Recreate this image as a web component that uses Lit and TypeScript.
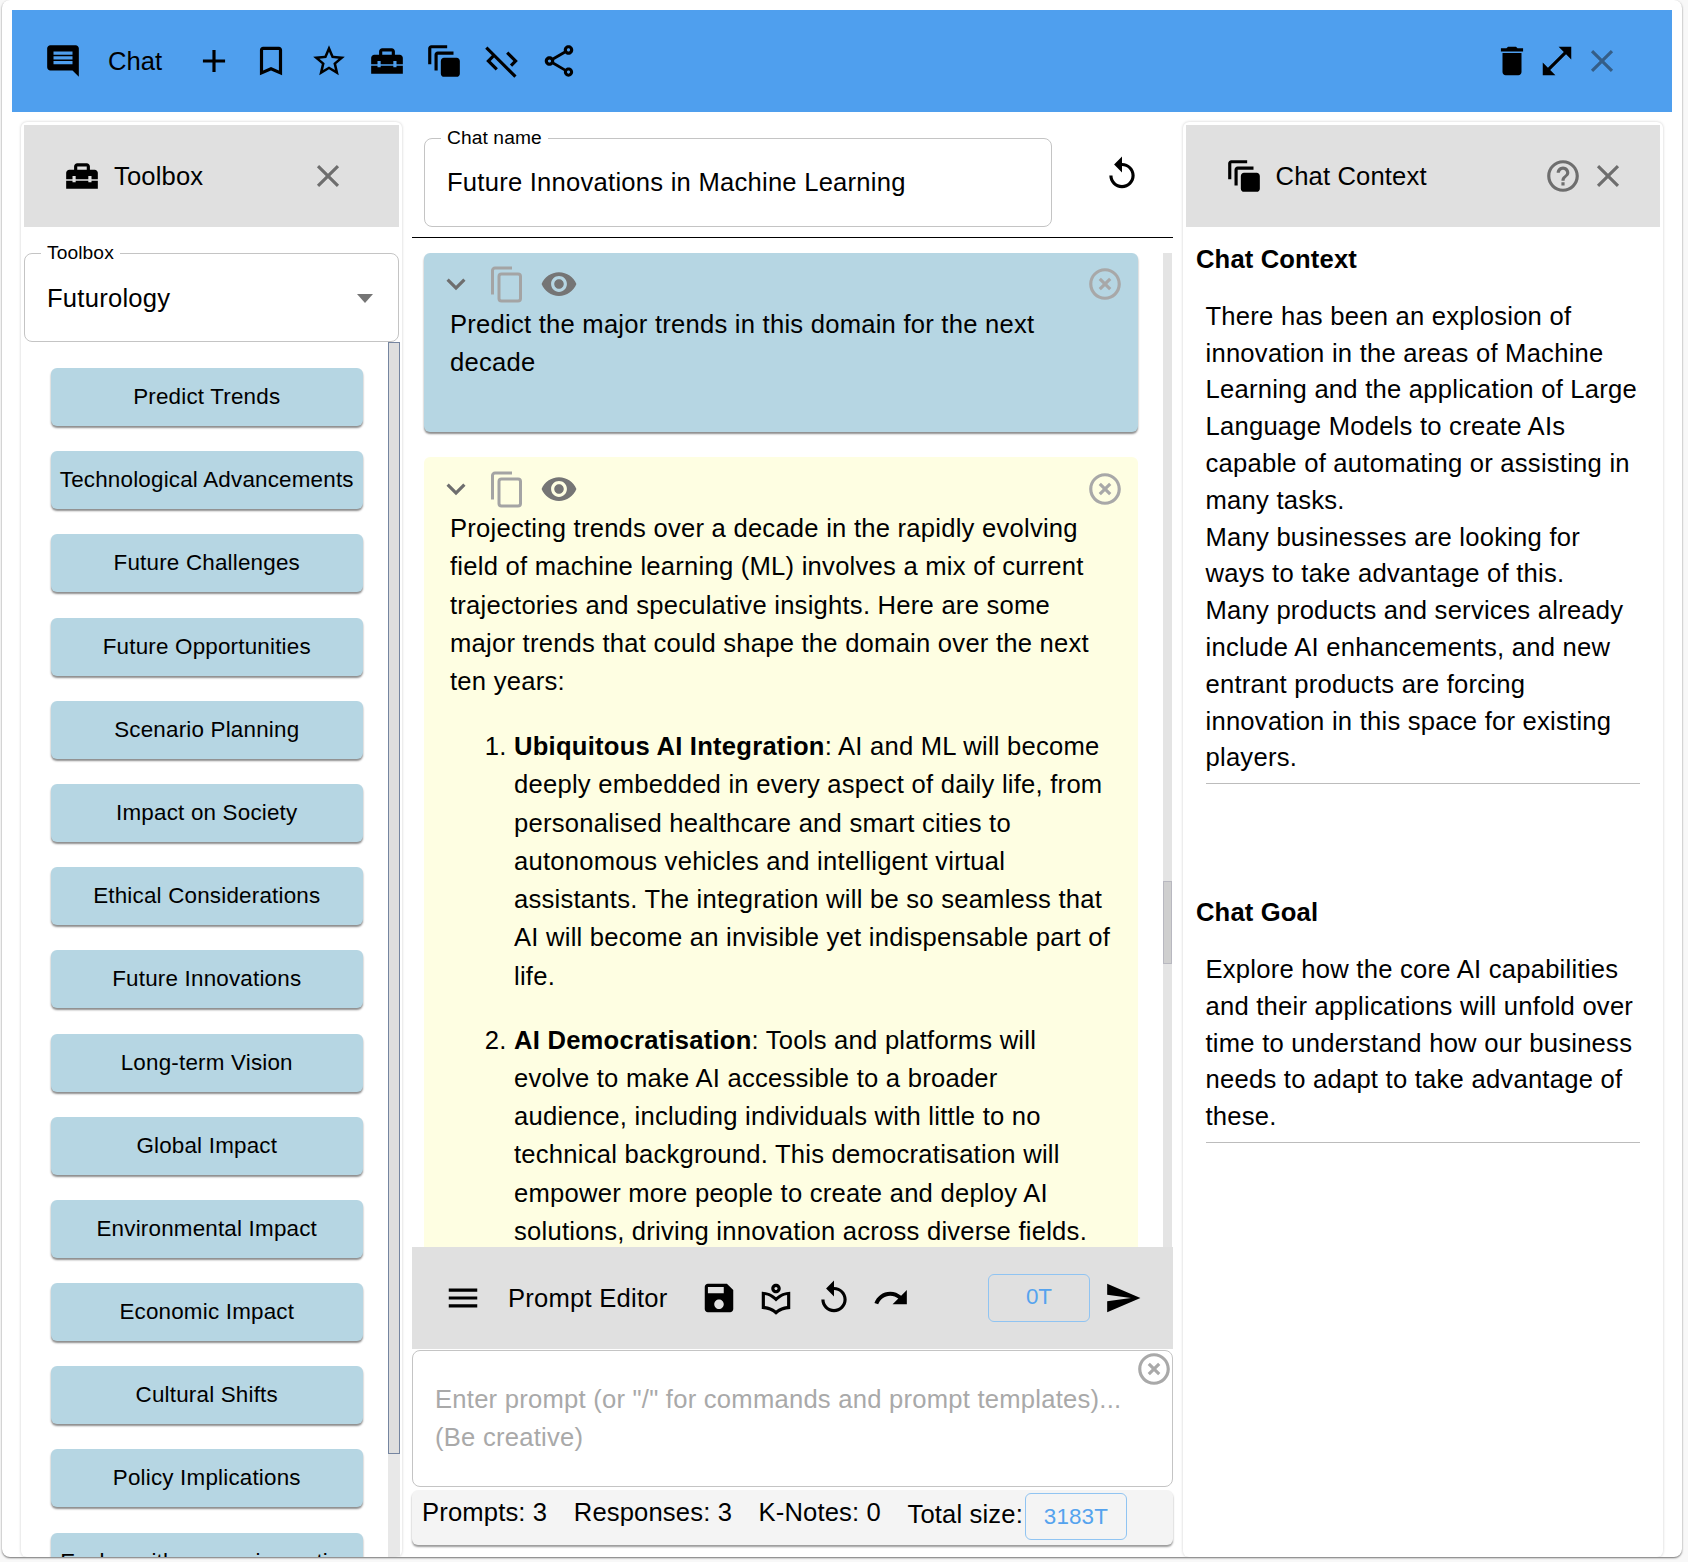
import { LitElement, css, html, svg } from "lit";
import { customElement } from "lit/decorators.js";

const ICONS: Record<string, string> = {
  comment: "M20 2H4c-1.1 0-2 .9-2 2v12c0 1.1.9 2 2 2h14l4 4V4c0-1.1-.9-2-2-2zm-2 12H6v-2h12v2zm0-3H6V9h12v2zm0-3H6V6h12v2z",
  add: "M19 13h-6v6h-2v-6H5v-2h6V5h2v6h6v2z",
  bookmark: "M17 3H7c-1.1 0-1.99.9-1.99 2L5 21l7-3 7 3V5c0-1.1-.9-2-2-2zm0 15l-5-2.18L7 18V5h10v13z",
  star: "M22 9.24l-7.19-.62L12 2 9.19 8.63 2 9.24l5.46 4.73L5.82 21 12 17.27 18.18 21l-1.63-7.03L22 9.24zM12 15.4l-3.76 2.27 1-4.28-3.32-2.88 4.38-.38L12 6.1l1.71 4.04 4.38.38-3.32 2.88 1 4.28L12 15.4z",
  toolbox: "M18 16h-2v-1H8v1H6v-1H2v5h20v-5h-4zm2-8h-3V6c0-1.1-.9-2-2-2H9c-1.1 0-2 .9-2 2v2H4c-1.1 0-2 .9-2 2v4h4v-2h2v2h8v-2h2v2h4v-4c0-1.1-.9-2-2-2zm-5 0H9V6h6v2z",
  stack: "M14 2H4c-1.1 0-2 .9-2 2v10h2V4h10V2zm4 4H8c-1.1 0-2 .9-2 2v10h2V8h10V6zm2 4h-8c-1.1 0-2 .9-2 2v8c0 1.1.9 2 2 2h8c1.1 0 2-.9 2-2v-8c0-1.1-.9-2-2-2z",
  codeOff: "M19.17 12l-4.58-4.59L16 6l6 6-3.59 3.59L17 14.17 19.17 12zM1.39 4.22l4.19 4.19L2 12l6 6 1.41-1.41L4.83 12 7 9.83l12.78 12.78 1.41-1.41L2.81 2.81 1.39 4.22z",
  share: "M18 16.08c-.76 0-1.44.3-1.96.77L8.91 12.7c.05-.23.09-.46.09-.7s-.04-.47-.09-.7l7.05-4.11c.54.5 1.25.81 2.04.81 1.66 0 3-1.34 3-3s-1.34-3-3-3-3 1.34-3 3c0 .24.04.47.09.7L8.04 9.81C7.5 9.31 6.79 9 6 9c-1.66 0-3 1.34-3 3s1.34 3 3 3c.79 0 1.5-.31 2.04-.81l7.12 4.16c-.05.21-.08.43-.08.65 0 1.61 1.31 2.92 2.92 2.92s2.92-1.31 2.92-2.92-1.31-2.92-2.92-2.92zM18 4c.55 0 1 .45 1 1s-.45 1-1 1-1-.45-1-1 .45-1 1-1zM6 13c-.55 0-1-.45-1-1s.45-1 1-1 1 .45 1 1-.45 1-1 1zm12 7.02c-.55 0-1-.45-1-1s.45-1 1-1 1 .45 1 1-.45 1-1 1z",
  trash: "M6 19c0 1.1.9 2 2 2h8c1.1 0 2-.9 2-2V7H6v12zM19 4h-3.5l-1-1h-5l-1 1H5v2h14V4z",
  expand: "M21 11V3h-8l3.29 3.29-10 10L3 13v8h8l-3.29-3.29 10-10z",
  close: "M19 6.41L17.59 5 12 10.59 6.41 5 5 6.41 10.59 12 5 17.59 6.41 19 12 13.41 17.59 19 19 17.59 13.41 12z",
  help: "M11 18h2v-2h-2v2zm1-16C6.48 2 2 6.48 2 12s4.48 10 10 10 10-4.48 10-10S17.52 2 12 2zm0 18c-4.41 0-8-3.59-8-8s3.59-8 8-8 8 3.59 8 8-3.59 8-8 8zm0-14c-2.21 0-4 1.79-4 4h2c0-1.1.9-2 2-2s2 .9 2 2c0 2-3 1.75-3 5h2c0-2.25 3-2.5 3-5 0-2.21-1.79-4-4-4z",
  chevron: "M16.59 8.59L12 13.17 7.41 8.59 6 10l6 6 6-6z",
  eye: "M12 4.5C7 4.5 2.73 7.61 1 12c1.73 4.39 6 7.5 11 7.5s9.27-3.11 11-7.5c-1.73-4.39-6-7.5-11-7.5zM12 17c-2.76 0-5-2.24-5-5s2.24-5 5-5 5 2.24 5 5-2.24 5-5 5zm0-8c-1.66 0-3 1.34-3 3s1.34 3 3 3 3-1.34 3-3-1.34-3-3-3z",
  clear: "M14.59 8L12 10.59 9.41 8 8 9.41 10.59 12 8 14.59 9.41 16 12 13.41 14.59 16 16 14.59 13.41 12 16 9.41 14.59 8zM12 2C6.47 2 2 6.47 2 12s4.47 10 10 10 10-4.47 10-10S17.53 2 12 2zm0 18c-4.41 0-8-3.59-8-8s3.59-8 8-8 8 3.59 8 8-3.59 8-8 8z",
  replay: "M12 5V1L7 6l5 5V7c3.31 0 6 2.69 6 6s-2.69 6-6 6-6-2.69-6-6H4c0 4.42 3.58 8 8 8s8-3.58 8-8-3.58-8-8-8z",
  menu: "M3 18h18v-2H3v2zm0-5h18v-2H3v2zm0-7v2h18V6H3z",
  save: "M17 3H5c-1.11 0-2 .9-2 2v14c0 1.1.89 2 2 2h14c1.1 0 2-.9 2-2V7l-4-4zm-5 16c-1.66 0-3-1.34-3-3s1.34-3 3-3 3 1.34 3 3-1.34 3-3 3zm3-10H5V5h10v4z",
  library: "M12 9c1.66 0 3-1.34 3-3s-1.34-3-3-3-3 1.34-3 3 1.34 3 3 3zm0-4c.55 0 1 .45 1 1s-.45 1-1 1-1-.45-1-1 .45-1 1-1zm0 6.55C9.64 9.35 6.48 8 3 8v11c3.48 0 6.64 1.35 9 3.55 2.36-2.19 5.52-3.55 9-3.55V8c-3.48 0-6.64 1.35-9 3.55zm7 5.58c-2.53.34-4.93 1.3-7 2.82-2.06-1.52-4.47-2.49-7-2.83V10.1c2.1.38 4.05 1.35 5.64 2.83L12 14.2l1.36-1.27c1.59-1.48 3.54-2.45 5.64-2.83v7.03z",
  redo: "M18.4 10.6C16.55 8.99 14.15 8 11.5 8c-4.65 0-8.58 3.03-9.96 7.22L3.9 16c1.05-3.19 4.05-5.5 7.6-5.5 1.95 0 3.73.72 5.12 1.88L13 16h9V7l-3.6 3.6z",
  send: "M2.01 21L23 12 2.01 3 2 10l15 2-15 2z",
};

const icon = (name: string, cls = "") =>
  html`<svg class="icon ${cls}" viewBox="0 0 24 24" aria-hidden="true">${svg`<path d=${ICONS[name]}></path>`}</svg>`;

const copyIcon = () =>
  html`<svg class="copy" viewBox="0 0 31 36" aria-hidden="true">
    <path d="M1.5 28V4a2.5 2.5 0 0 1 2.5-2.5h17" fill="none" stroke="#a4a4a4" stroke-width="3"></path>
    <rect x="8" y="7.5" width="21.5" height="27" rx="2.5" fill="none" stroke="#a4a4a4" stroke-width="3"></rect>
  </svg>`;

const TOOLS = [
  "Predict Trends",
  "Technological Advancements",
  "Future Challenges",
  "Future Opportunities",
  "Scenario Planning",
  "Impact on Society",
  "Ethical Considerations",
  "Future Innovations",
  "Long-term Vision",
  "Global Impact",
  "Environmental Impact",
  "Economic Impact",
  "Cultural Shifts",
  "Policy Implications",
  "Evolve with worsening action",
];

@customElement("app-root")
export class AppRoot extends LitElement {
  static styles = css`
    :host {
      display: block;
      width: 1688px;
      height: 1562px;
      background: #f8f8f8;
      font-family: "Liberation Sans", Arial, sans-serif;
      color: #000;
      overflow: hidden;
    }
    .shell {
      box-sizing: border-box;
      width: 1680px;
      height: 1557px;
      margin-left: 2px;
      padding: 10px 10px 0;
      background: #fff;
      border-radius: 8px;
      overflow: hidden;
      box-shadow: 0 1px 2px rgba(0, 0, 0, 0.55);
    }
    .icon {
      display: block;
      width: 38px;
      height: 38px;
      flex: none;
      fill: currentColor;
    }
    .grey {
      color: #6e6e6e;
    }
    .topbar {
      display: flex;
      align-items: center;
      height: 102px;
      padding-left: 32px;
      background: #4f9fee;
    }
    .topbtn {
      width: 57.6px;
      display: flex;
      justify-content: center;
    }
    .topbar .tools {
      display: flex;
      margin-left: 23px;
    }
    .chat-label {
      font-size: 25.6px;
      margin-left: 26px;
    }
    .topbar .right {
      display: flex;
      gap: 7px;
      margin-left: auto;
      margin-right: 51px;
    }
    .dim {
      color: #355e87;
    }

    .columns {
      display: flex;
      gap: 10px;
      height: 1435px;
      margin: 10px 0 0 9px;
    }
    .panel {
      box-sizing: border-box;
      padding: 3px 3px 0;
      border-radius: 6px;
      box-shadow: 0 0 3px rgba(0, 0, 0, 0.2);
      display: flex;
      flex-direction: column;
      overflow: hidden;
    }
    .left {
      width: 381px;
    }
    .right-panel {
      width: 480px;
    }
    .title {
      display: flex;
      align-items: center;
      flex: none;
      height: 102px;
      background: #e0e0e0;
      font-size: 25.6px;
      letter-spacing: 0.15px;
    }
    .left .title {
      padding-left: 39px;
    }
    .left .title span {
      margin-left: 13px;
    }
    .left .title .icon:last-child {
      margin-left: auto;
      margin-right: 52px;
    }
    .right-panel .title {
      padding-left: 39px;
    }
    .right-panel .title span {
      margin-left: 12.5px;
    }
    .right-panel .title .help {
      margin-left: auto;
    }
    .right-panel .title .icon:last-child {
      margin-left: 7px;
      margin-right: 33px;
    }

    .outlined {
      position: relative;
      box-sizing: border-box;
      height: 89px;
      border: 1px solid #c4c4c4;
      border-radius: 8px;
      padding: 0 22px;
      font-size: 25.6px;
      letter-spacing: 0.24px;
      line-height: 86px;
    }
    .outlined label {
      position: absolute;
      top: -13px;
      left: 16px;
      padding: 0 6px;
      background: #fff;
      font-size: 19.2px;
      letter-spacing: 0.1px;
      line-height: 24px;
    }
    .select {
      flex: none;
      margin-top: 26px;
      line-height: 89px;
    }
    .select .arrow {
      position: absolute;
      right: 25px;
      top: 40px;
      width: 0;
      height: 0;
      border-left: 8px solid transparent;
      border-right: 8px solid transparent;
      border-top: 9px solid #757575;
    }
    .tool-wrap {
      display: flex;
      flex: 1;
      min-height: 0;
    }
    .tool-list {
      flex: 1;
      overflow: hidden;
      padding: 26px 0 0 26.5px;
      display: flex;
      flex-direction: column;
      gap: 25.2px;
    }
    .tool {
      flex: none;
      box-sizing: border-box;
      width: 312.5px;
      height: 58px;
      border-radius: 6px;
      background: #b6d6e3;
      box-shadow: 0 2px 2px rgba(0, 0, 0, 0.45);
      font-size: 22.4px;
      letter-spacing: 0.2px;
      line-height: 58px;
      text-align: center;
      white-space: nowrap;
    }
    .track {
      flex: none;
      width: 12px;
      margin-right: -1px;
      background: #e8e8e8;
    }
    .tool-wrap .thumb {
      box-sizing: border-box;
      height: 1112px;
      background: #dedede;
      border: 1px solid #7585a0;
    }

    .middle {
      width: 761px;
      flex: none;
      display: flex;
      flex-direction: column;
      padding-bottom: 12px;
      box-sizing: border-box;
    }
    .name-row {
      display: flex;
      align-items: flex-start;
      flex: none;
      height: 116px;
      padding: 16px 0 0 12px;
      box-sizing: border-box;
      border-bottom: 1px solid #000;
    }
    .name-field {
      width: 628px;
    }
    .reset {
      margin: 17px 0 0 51px;
    }
    .messages {
      display: flex;
      flex: 1;
      min-height: 0;
      padding-top: 15px;
    }
    .msg-list {
      flex: 1;
      overflow: hidden;
      padding-left: 12px;
    }
    .msg-track {
      flex: none;
      width: 9px;
      margin-right: 1px;
      background: #e4e4e4;
      padding-top: 628px;
    }
    .msg-track .thumb {
      height: 83px;
      box-sizing: border-box;
      background: #cfcfcf;
      border: 1px solid #b8b8c0;
    }
    .card {
      width: 714px;
      box-sizing: border-box;
      border-radius: 6px;
      padding: 0 26px;
      font-size: 25.6px;
      letter-spacing: 0.24px;
      line-height: 38.3px;
    }
    .card.prompt {
      height: 179px;
      margin-bottom: 25px;
      background: #b6d6e3;
      box-shadow: 0 2px 2px rgba(0, 0, 0, 0.45);
    }
    .card.response {
      background: #fefee2;
      padding-bottom: 30px;
    }
    .card-icons {
      display: flex;
      align-items: center;
      height: 62px;
      margin-left: -13px;
      margin-bottom: -10px;
    }
    .card.response .card-icons {
      height: 64px;
      margin-bottom: -12px;
    }
    .card-icons .copy {
      width: 31px;
      height: 37px;
      margin-left: 16px;
    }
    .card-icons .eye {
      margin-left: 18px;
      color: #757575;
    }
    .card-icons .clear {
      margin-left: auto;
      margin-right: -12px;
      color: #a8a8a8;
    }
    .card p {
      margin: 0;
    }
    .card ol {
      margin: 26.5px 0 0;
      padding-left: 64px;
    }
    .card li {
      margin-bottom: 25.5px;
    }
    .editor-bar {
      display: flex;
      align-items: center;
      flex: none;
      height: 102px;
      background: #e0e0e0;
      font-size: 25.6px;
      padding-left: 32px;
    }
    .editor-bar .label {
      letter-spacing: 0.24px;
      margin-left: 26px;
      margin-right: 32px;
    }
    .editor-bar .gap {
      margin-left: 19.6px;
    }
    .token {
      box-sizing: border-box;
      border: 1px solid #90c4f2;
      border-radius: 6px;
      color: #55a3ee;
      font-size: 22.4px;
      text-align: center;
    }
    .editor-bar .token {
      width: 102px;
      height: 48px;
      line-height: 44px;
      margin-left: auto;
    }
    .editor-bar .send {
      margin: 0 31px 0 14px;
    }
    .prompt-box {
      position: relative;
      flex: none;
      box-sizing: border-box;
      height: 137px;
      margin-top: 1px;
      padding: 29px 22px 0;
      border: 1px solid #c4c4c4;
      border-radius: 8px;
      font-size: 25.6px;
      letter-spacing: 0.24px;
      line-height: 38.3px;
      color: #a9a9a9;
    }
    .prompt-box .icon {
      position: absolute;
      top: -1px;
      right: -1px;
    }
    .status {
      display: flex;
      align-items: center;
      flex: none;
      box-sizing: border-box;
      height: 55px;
      margin-top: 3px;
      padding-left: 10px;
      border-radius: 6px;
      background: #f4f4f4;
      box-shadow: 0 2px 2px rgba(0, 0, 0, 0.4);
      font-size: 25.6px;
      letter-spacing: 0.15px;
    }
    .status span {
      margin-right: 26.5px;
      position: relative;
      top: -5px;
    }
    .status .total {
      margin-right: 2px;
      top: -3px;
    }
    .status .token {
      width: 102px;
      height: 47px;
      line-height: 45px;
      position: relative;
      top: -1px;
    }

    .context {
      padding: 0 20px 0 10px;
      font-size: 25.6px;
      letter-spacing: 0.24px;
      line-height: 36.8px;
    }
    .context h3 {
      margin: 0;
      font-size: 25.6px;
      font-weight: 700;
      letter-spacing: 0.14px;
    }
    .context .heading-one {
      margin-top: 14px;
    }
    .context .heading-two {
      margin-top: 110px;
    }
    .context .body {
      margin: 20px 0 0 9.5px;
      padding-bottom: 7px;
      border-bottom: 1px solid #bcbcbc;
    }
  `;

  render() {
    return html`
      <div class="shell">
        <header class="topbar">
          ${icon("comment")}
          <span class="chat-label">Chat</span>
          <div class="tools">
            ${["add", "bookmark", "star", "toolbox", "stack", "codeOff", "share"].map(
              (n) => html`<div class="topbtn">${icon(n)}</div>`,
            )}
          </div>
          <div class="right">
            ${icon("trash")} ${icon("expand")} ${icon("close", "dim")}
          </div>
        </header>

        <div class="columns">
          <section class="panel left">
            <div class="title">
              ${icon("toolbox")}<span>Toolbox</span>${icon("close", "grey")}
            </div>
            <div class="outlined select">
              <label>Toolbox</label>Futurology<i class="arrow"></i>
            </div>
            <div class="tool-wrap">
              <div class="tool-list">
                ${TOOLS.map((t) => html`<div class="tool">${t}</div>`)}
              </div>
              <div class="track"><div class="thumb"></div></div>
            </div>
          </section>

          <section class="middle">
            <div class="name-row">
              <div class="outlined name-field">
                <label>Chat name</label>Future Innovations in Machine Learning
              </div>
              ${icon("replay", "reset")}
            </div>
            <div class="messages">
              <div class="msg-list">
                <article class="card prompt">
                  ${this.cardIcons()}
                  <p>Predict the major trends in this domain for the next decade</p>
                </article>
                <article class="card response">
                  ${this.cardIcons()}
                  <p>
                    Projecting trends over a decade in the rapidly evolving field of machine
                    learning (ML) involves a mix of current trajectories and speculative insights.
                    Here are some major trends that could shape the domain over the next ten years:
                  </p>
                  <ol>
                    <li>
                      <b>Ubiquitous AI Integration</b>: AI and ML will become deeply embedded in
                      every aspect of daily life, from personalised healthcare and smart cities to
                      autonomous vehicles and intelligent virtual assistants. The integration will
                      be so seamless that AI will become an invisible yet indispensable part of
                      life.
                    </li>
                    <li>
                      <b>AI Democratisation</b>: Tools and platforms will evolve to make AI
                      accessible to a broader audience, including individuals with little to no
                      technical background. This democratisation will empower more people to
                      create and deploy AI solutions, driving innovation across diverse fields.
                    </li>
                  </ol>
                </article>
              </div>
              <div class="msg-track"><div class="thumb"></div></div>
            </div>
            <div class="editor-bar">
              ${icon("menu")}
              <span class="label">Prompt Editor</span>
              ${icon("save")} ${icon("library", "gap")} ${icon("replay", "gap")}
              ${icon("redo", "gap")}
              <div class="token">0T</div>
              ${icon("send", "send")}
            </div>
            <div class="prompt-box">
              Enter prompt (or "/" for commands and prompt templates)...<br />(Be creative)
              ${icon("clear")}
            </div>
            <div class="status">
              <span>Prompts: 3</span>
              <span>Responses: 3</span>
              <span>K-Notes: 0</span>
              <span class="total">Total size:</span>
              <div class="token">3183T</div>
            </div>
          </section>

          <section class="panel right-panel">
            <div class="title">
              ${icon("stack")}<span>Chat Context</span>${icon("help", "grey help")}${icon(
                "close",
                "grey",
              )}
            </div>
            <div class="context">
              <h3 class="heading-one">Chat Context</h3>
              <div class="body">
                There has been an explosion of innovation in the areas of Machine Learning and the
                application of Large Language Models to create AIs capable of automating or
                assisting in many tasks.<br />
                Many businesses are looking for ways to take advantage of this.<br />
                Many products and services already include AI enhancements, and new entrant
                products are forcing innovation in this space for existing players.
              </div>
              <h3 class="heading-two">Chat Goal</h3>
              <div class="body">
                Explore how the core AI capabilities and their applications will unfold over time
                to understand how our business needs to adapt to take advantage of these.
              </div>
            </div>
          </section>
        </div>
      </div>
    `;
  }

  cardIcons() {
    return html`<div class="card-icons">
      ${icon("chevron", "grey")} ${copyIcon()} ${icon("eye", "eye")} ${icon("clear", "clear")}
    </div>`;
  }
}
